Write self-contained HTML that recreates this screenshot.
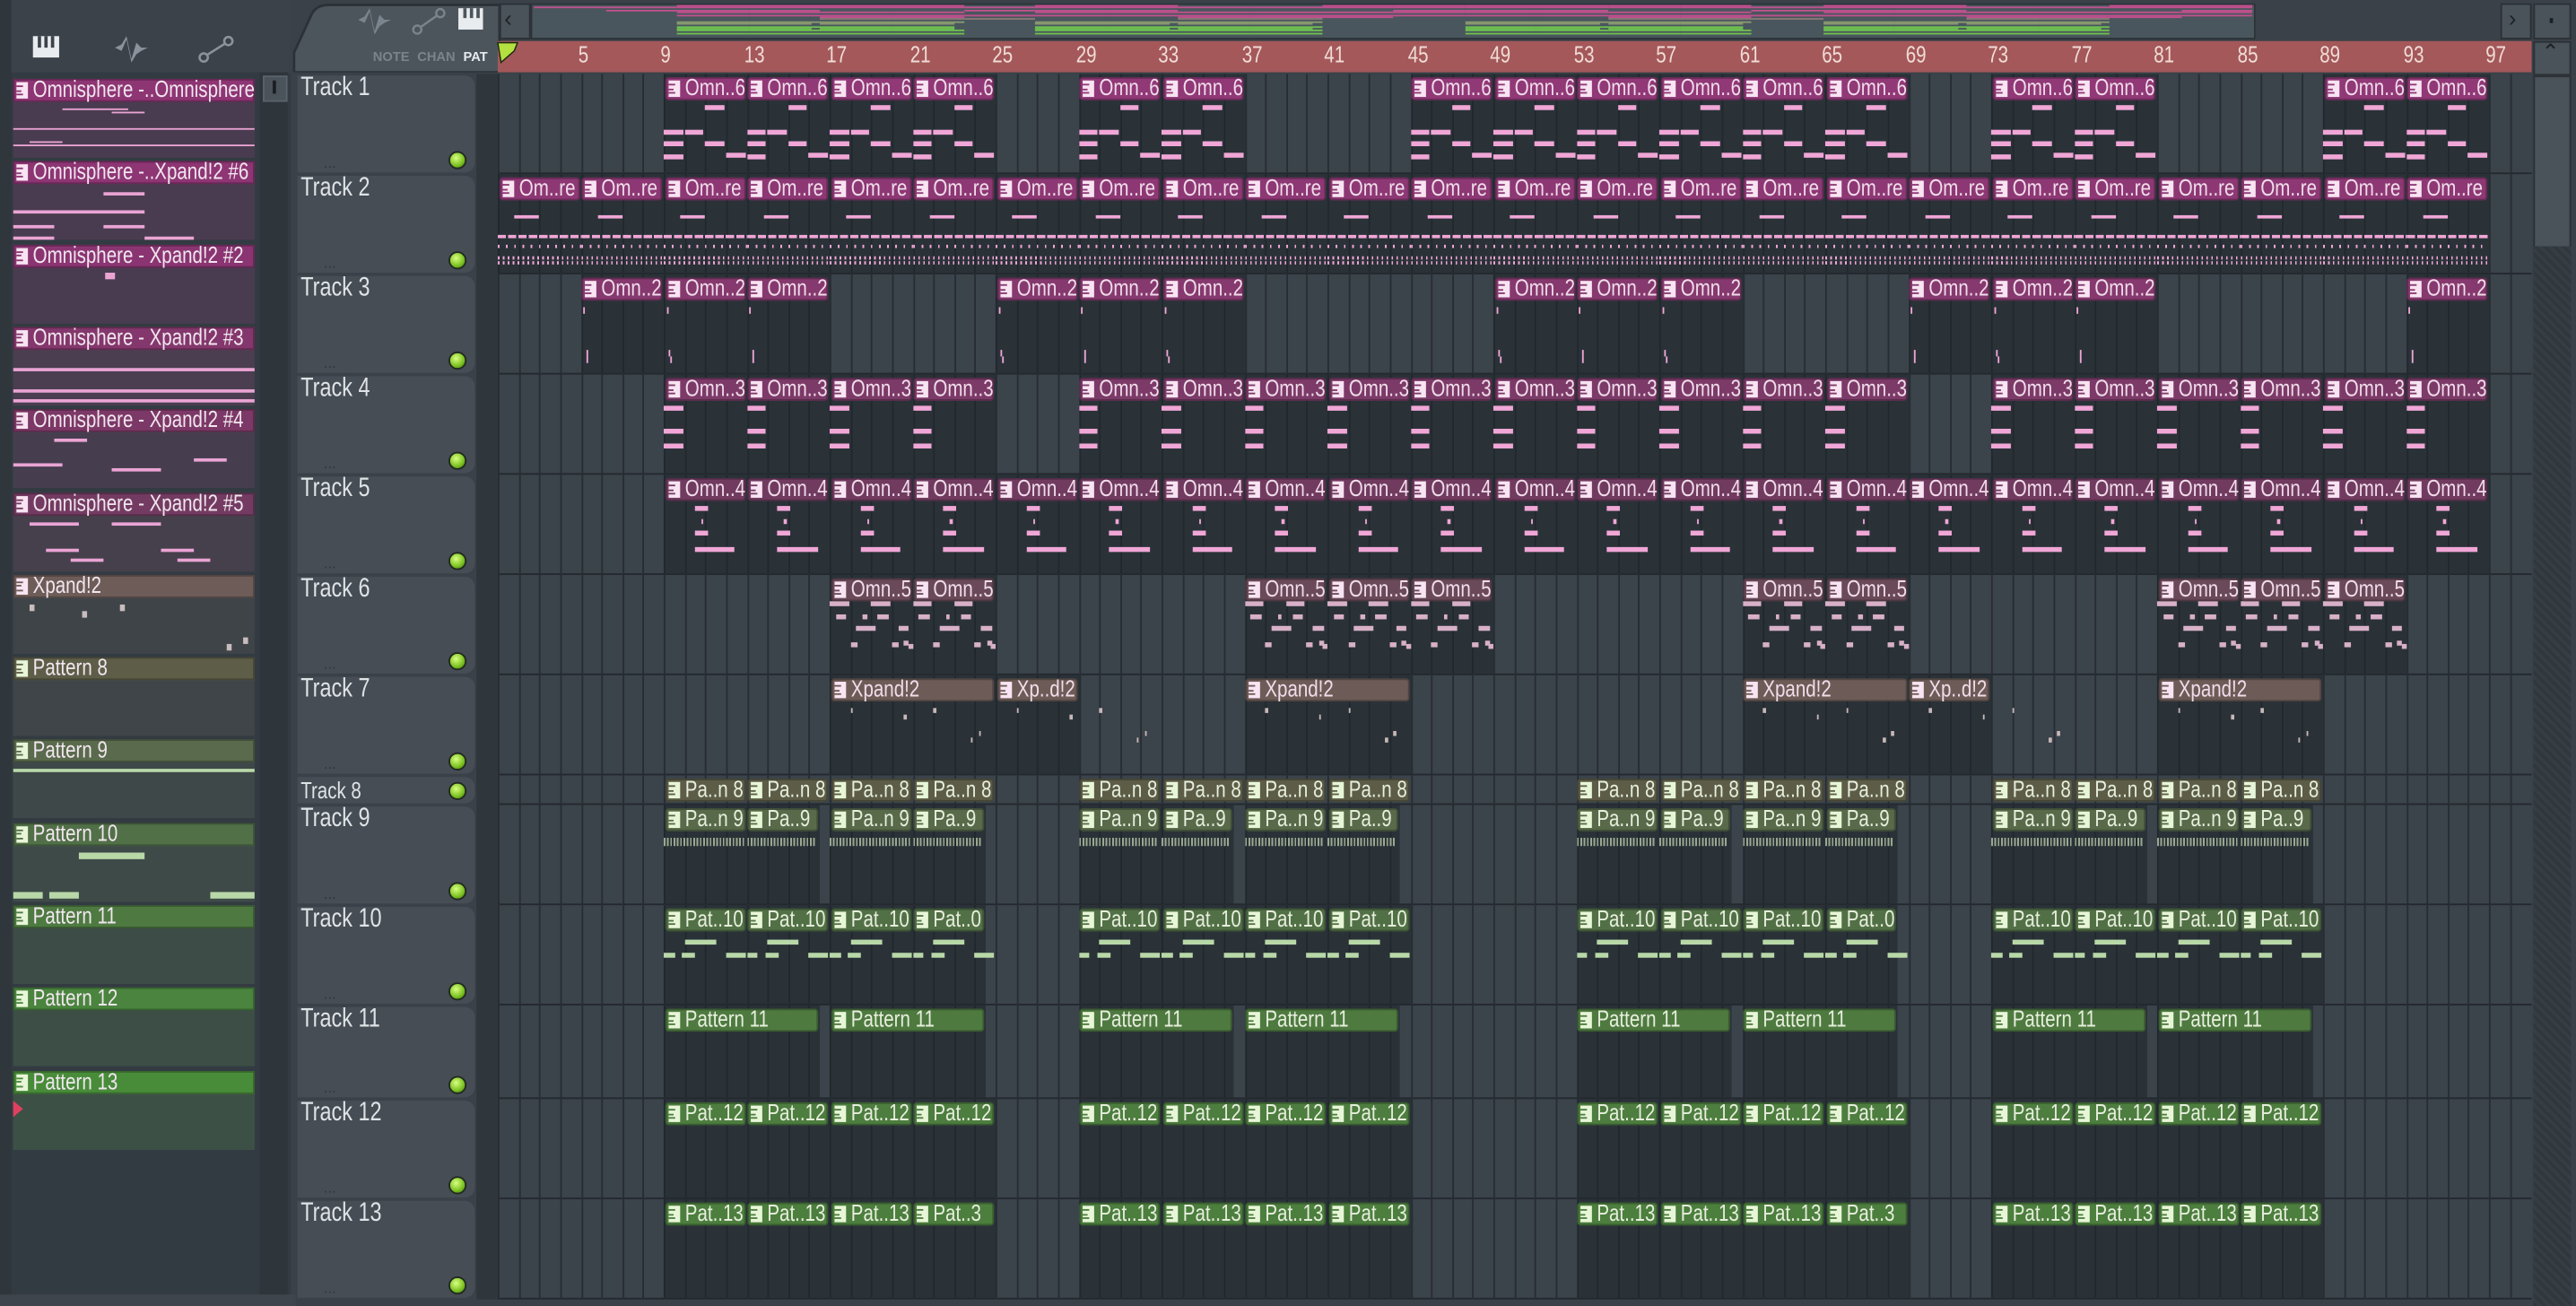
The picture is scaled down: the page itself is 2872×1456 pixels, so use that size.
<!DOCTYPE html>
<html><head><meta charset="utf-8">
<style>
html,body{margin:0;padding:0;background:#3a4148;overflow:hidden;width:2872px;height:1456px}
#w{position:absolute;left:0;top:0;width:1568px;height:795px;transform:scale(1.83163,1.83145);transform-origin:0 0;background:#3a4148;font-family:"Liberation Sans Narrow","Liberation Sans",sans-serif;overflow:hidden}
.a{position:absolute}
.t{position:absolute;white-space:nowrap}
.cn{display:inline-block;transform:scaleX(.8);transform-origin:0 0;white-space:nowrap}
</style></head><body>
<div id="w">
 <div class="a" style="left:0;top:0;width:7px;height:795px;background:#2f363c"></div>
 <div class="a" style="left:7px;top:0;width:170px;height:44px;background:#3b4249"></div>
 <div class="a" style="left:7px;top:44px;width:170px;height:745px;background:#333b42"></div>
 <div class="a" style="left:158px;top:44px;width:17px;height:745px;background:#2e353b"></div>
 <div class="a" style="left:160px;top:46px;width:13px;height:14px;background:#4a525a;border:1px solid #5a636b"></div>
 <div class="a" style="left:166px;top:49px;width:2px;height:8px;background:#1a1e22"></div>
 <div class="a" style="left:0;top:788px;width:180px;height:7px;background:#3e454c"></div>
 <svg class="a" style="left:20px;top:20px" width="130" height="20" viewBox="0 0 130 20">
  <rect x="0" y="2" width="16" height="13" fill="#e8ecef"/><rect x="3" y="2" width="2" height="7" fill="#3b4249"/><rect x="7" y="2" width="2" height="7" fill="#3b4249"/><rect x="11" y="2" width="2" height="7" fill="#3b4249"/>
  <path d="M50 9 L54 7 L57 2 L60 16 L63 6 L66 9 L70 9 L66 11 L63 13 L60 18 L57 4 L54 11 L50 9Z" fill="#8a939b"/>
  <circle cx="104" cy="15" r="2.5" fill="none" stroke="#8a939b" stroke-width="1.4"/><circle cx="119" cy="5" r="2.5" fill="none" stroke="#8a939b" stroke-width="1.4"/><line x1="106" y1="13.5" x2="117" y2="6.5" stroke="#8a939b" stroke-width="1.4"/>
 </svg>

 <div class="a" style="left:176px;top:0;width:1392px;height:45px;background:#3a4148"></div>
 <svg class="a" style="left:178px;top:2px" width="128" height="42" viewBox="0 0 128 42"><path d="M1 42 L1 30 L12 6 Q15 1 22 1 L126 1 L126 42Z" fill="#4d555c" stroke="#2b3136" stroke-width="1.5"/></svg>
 <svg class="a" style="left:218px;top:3px" width="80" height="20" viewBox="0 0 80 20">
  <path d="M0 9 L4 7 L7 2 L10 16 L13 6 L16 9 L20 9 L16 11 L13 13 L10 18 L7 4 L4 11Z" fill="#7a848c"/>
  <circle cx="36" cy="15" r="2.5" fill="none" stroke="#7a848c" stroke-width="1.3"/><circle cx="50" cy="5" r="2.5" fill="none" stroke="#7a848c" stroke-width="1.3"/><line x1="38" y1="13.5" x2="48" y2="6.5" stroke="#7a848c" stroke-width="1.3"/>
  <rect x="61" y="2" width="15" height="13" fill="#e8ecef"/><rect x="64" y="2" width="2" height="6" fill="#4d555c"/><rect x="68" y="2" width="2" height="6" fill="#4d555c"/><rect x="72" y="2" width="2" height="6" fill="#4d555c"/>
 </svg>
 <div class="t" style="left:227px;top:30px;font-size:8px;color:#7a848c;font-weight:bold">NOTE</div>
 <div class="t" style="left:254px;top:30px;font-size:8px;color:#7a848c;font-weight:bold">CHAN</div>
 <div class="t" style="left:282px;top:30px;font-size:8px;color:#e6ebee;font-weight:bold">PAT</div>
 <div class="a" style="left:304px;top:2px;width:17px;height:20px;background:#4a535a;border:1px solid #2a3035"></div>
 <div class="t" style="left:307px;top:3px;font-size:14px;color:#1e2226">&lsaquo;</div>
 <div class="a" style="left:323px;top:2px;width:1048px;height:20px;background:#4a565d;border:1px solid #2c3338"></div>
 <div class="a" style="left:1522px;top:2px;width:17px;height:20px;background:#4a535a;border:1px solid #2a3035"></div>
 <div class="t" style="left:1527px;top:3px;font-size:14px;color:#1e2226">&rsaquo;</div>
 <div class="a" style="left:1542px;top:2px;width:21px;height:20px;background:#4a535a;border:1px solid #2a3035"></div>
 <div class="a" style="left:1552px;top:11px;width:2px;height:3px;background:#1a1e22"></div>
 <div class="a" style="left:303px;top:25px;width:1238px;height:19px;background:#a4585a"></div>
 <svg class="a" style="left:302px;top:25px" width="14" height="14" viewBox="0 0 14 14"><path d="M1 1 L13 1 L11 6 L3 13 Z" fill="#b4e040" stroke="#1c2a10" stroke-width="0.8"/></svg>
 <div class="a" style="left:1542px;top:25px;width:21px;height:19px;background:#4a535a;border:1px solid #2a3035"></div>
 <div class="t" style="left:1547px;top:24px;font-size:13px;color:#1e2226">&#8963;</div>
 <div class="a" style="left:1542px;top:46px;width:21px;height:103px;background:#4a535a;border:1px solid #2a3035"></div>
 <div class="a" style="left:1542px;top:150px;width:23px;height:645px;background:repeating-linear-gradient(45deg,#30373d 0 2px,#363d43 2px 4px)"></div>
</div>
<script>
(function(){
const W=document.getElementById('w');
function el(css,html,cls){const d=document.createElement('div');d.className=cls||'a';d.style.cssText=css;if(html)d.innerHTML=html;W.appendChild(d);return d;}
const cn=s=>'<span class="cn">'+s+'</span>';
const X0=303,BW=12.625;
const bx=n=>X0+(n-1)*BW;
[5,9,13,17,21,25,29,33,37,41,45,49,53,57,61,65,69,73,77,81,85,89,93,97].forEach(n=>{
 el('left:'+(bx(n)-2)+'px;top:25px;font-size:14px;color:#f0dcd6',cn(''+n),'t');});
const ovx=b=>325+(b-1)*10.9;
el('left:303px;top:45px;width:1238px;height:746px;background:#3b434b');
const tops=[45,106,167,228,289,350,411,472,490,551,612,669,730,791];
for(let i=0;i<13;i++){
 const t=tops[i],h=tops[i+1]-t;
 el('left:181px;top:'+(t+1)+'px;width:108px;height:'+(h-2)+'px;background:#464d55;border-radius:0 6px 6px 0');
 el('left:183px;top:'+(t+(h<30?1:0))+'px;font-size:'+(h<30?14:16)+'px;color:#dfe3e6',cn('Track '+(i+1)),'t');
 const dy=h<30?t+9:t+h-9;
 el('left:273px;top:'+(dy-5)+'px;width:9px;height:9px;border-radius:50%;background:radial-gradient(circle at 40% 35%,#d8ff80,#7ac020 60%,#3a6a10);border:1px solid #222a20');
 if(h>30) el('left:197px;top:'+(t+h-12)+'px;font-size:9px;color:#2f353b','...','t');
 el('left:290px;top:'+t+'px;width:13px;height:'+h+'px;background:#2f363c');
 el('left:303px;top:'+(t+h-1)+'px;width:1238px;height:1px;background:#23292e');
}
let g='';
for(let n=1;n<=98;n++){g+='<div style="position:absolute;left:'+(bx(n)-X0)+'px;top:0;width:1px;height:746px;background:#272d32"></div>';}
const pinkH=['#913877','#8d3874','#86396e','#7c3a68','#713b60','#6a4a58'];
const A=(s,e)=>{const r=[];for(let b=s;b<=e;b+=4)r.push(b);return r;};
const grpA=[9,13,17,21,29,33,37,41,53,57,61,65,73,77,81,85];
const T=[
 {c:pinkH[0],b:1,cl:[9,13,17,21,29,33,45,49,53,57,61,65,73,77,89,93].map(x=>[x,4,'Omn..6']),
  notes:[[2,19,1],[0,34,1],[1,34,1],[0,41,1],[2,41,1],[0,49,1],[3,48,1]]},
 {c:pinkH[1],b:1,cl:A(1,93).map(x=>[x,4,'Om..re']),notes:'t2'},
 {c:pinkH[2],b:1,cl:[5,9,13,25,29,33,49,53,57,69,73,77,93].map(x=>[x,4,'Omn..2']),notes:[[0.15,20,0.05],[0.25,46,0.05],[0.3,50,0.05]]},
 {c:pinkH[3],b:1,cl:[9,13,17,21,29,33,37,41,45,49,53,57,61,65,73,77,81,85,89,93].map(x=>[x,4,'Omn..3']),notes:[[0,19,1],[0,33,1],[0,42,1]]},
 {c:pinkH[4],b:1,cl:A(9,93).map(x=>[x,4,'Omn..4']),notes:[[1.5,19,0.7],[1.8,27,0.2],[1.5,34,0.7],[1.5,44,2]]},
 {c:pinkH[5],n:'#d8b0c8',b:1,cl:[17,21,37,41,45,61,65,81,85,89].map(x=>[x,4,'Omn..5']),notes:[[0,16,1],[2,16,1],[0.3,24,0.6],[2.3,24,0.6],[1.6,24,0.3],[1.3,31,1],[3.3,31,0.6],[1,41,0.4],[3,41,0.4],[3.6,40,0.3],[3.8,42,0.3]]},
 {c:'#6d5b57',n:'#c8b8b8',b:1,cl:[[17,8,'Xpand!2'],[25,4,'Xp..d!2'],[37,8,'Xpand!2'],[61,8,'Xpand!2'],[69,4,'Xp..d!2'],[81,8,'Xpand!2']],notes:[[1,20,0.2],[3.6,24,0.2],[5,20,0.2],[6.8,38,0.2],[7.2,34,0.2]]},
 {c:'#5c5c47',cl:grpA.map(x=>[x,4,'Pa..n 8']),notes:[]},
 {c:'#586a4a',n:'#a8b8a0',b:1,cl:grpA.map((x,i)=>[x,i%2?3.5:4,i%2?'Pa..9':'Pa..n 9']),notes:'t9'},
 {c:'#527046',n:'#b8d8a8',b:1,cl:grpA.map((x,i)=>[x,i%8==3?3.5:4,i%8==3?'Pat..0':'Pat..10']),notes:[[1,21,1.6],[0,29,0.6],[0.9,29,0.7],[3,29,1]]},
 {c:'#4e7a40',b:1,cl:[9,17,29,37,53,61,73,81].map(x=>[x,7.5,'Pattern 11']),notes:[]},
 {c:'#4d7d3f',b:1,cl:grpA.map(x=>[x,4,'Pat..12']),notes:[]},
 {c:'#4c7e3e',b:1,cl:grpA.map((x,i)=>[x,4,i==3||i==11?'Pat..3':'Pat..13']),notes:[]},
];
const icon=(c,bg)=>'<div style="position:absolute;left:2px;top:2px;width:7px;height:10px;background:'+bg+'"></div>'+
 '<div style="position:absolute;left:2px;top:4px;width:4px;height:1px;background:'+c+'"></div><div style="position:absolute;left:2px;top:6.5px;width:3px;height:1px;background:'+c+'"></div><div style="position:absolute;left:2px;top:9px;width:4px;height:1px;background:'+c+'"></div>';
T.forEach((tk,i)=>{
 const t=tops[i],h=tops[i+1]-t;
 tk.cl.forEach(([s,len,name])=>{
  const x=bx(s)-X0,w=len*BW;
  if(tk.b&&h>30) g+='<div style="position:absolute;left:'+x+'px;top:'+(t-45)+'px;width:'+w+'px;height:'+(h-1)+'px;background:rgba(30,36,42,.55)"></div>';
  const nc=tk.n||'#f0a6d6';
  if(Array.isArray(tk.notes)) tk.notes.forEach(([nx,ny,nw])=>{
   g+='<div style="position:absolute;left:'+(x+nx*BW)+'px;top:'+(t-45+ny)+'px;width:'+Math.max(1,nw*BW-1)+'px;height:'+(i==2?4:3)+'px;background:'+nc+'"></div>';});
  else if(tk.notes=='t2'){
   g+='<div style="position:absolute;left:'+(x+BW*0.8)+'px;top:'+(t-45+25)+'px;width:'+BW*1.2+'px;height:1.5px;background:'+nc+'"></div>';
   g+='<div style="position:absolute;left:'+x+'px;top:'+(t-45+37)+'px;width:'+w+'px;height:1.5px;background:repeating-linear-gradient(90deg,'+nc+' 0 5px,transparent 5px 6.3px)"></div>';
   g+='<div style="position:absolute;left:'+x+'px;top:'+(t-45+43)+'px;width:'+w+'px;height:1.5px;background:repeating-linear-gradient(90deg,'+nc+' 0 1px,transparent 1px 5px)"></div>';
   g+='<div style="position:absolute;left:'+x+'px;top:'+(t-45+50)+'px;width:'+w+'px;height:1.5px;background:repeating-linear-gradient(90deg,'+nc+' 0 1px,transparent 1px 3px)"></div>';
   g+='<div style="position:absolute;left:'+x+'px;top:'+(t-45+53)+'px;width:'+w+'px;height:1.5px;background:repeating-linear-gradient(90deg,'+nc+' 0 1px,transparent 1px 3px)"></div>';
  } else if(tk.notes=='t9'){
   g+='<div style="position:absolute;left:'+x+'px;top:'+(t-45+20)+'px;width:'+(w-2)+'px;height:5px;background:repeating-linear-gradient(90deg,#9aa890 0 1px,transparent 1px 2px)"></div>';
  }
  g+='<div style="position:absolute;left:'+(x+0.5)+'px;top:'+(t-45+2)+'px;width:'+(w-1.5)+'px;height:14px;background:'+tk.c+';border-radius:2px;box-shadow:inset 0 0 0 1px rgba(0,0,0,.25);overflow:hidden;white-space:nowrap">'+
   icon(tk.c,i<7?'#f8e4f2':'#e8f6d8')+
   '<div style="position:absolute;left:12px;top:-2px;font-size:14px;color:'+(i<7?'#f0dcea':'#e6eedc')+'">'+cn(name)+'</div></div>';
  const oc=i<6?'#c0508e':(i<7?'#8a7a78':(i<9?'#8a9a70':'#6ec050'));
  const oy=3+i*1.4;
  el('left:'+ovx(s)+'px;top:'+oy+'px;width:'+(len*10.9)+'px;height:1px;background:'+oc);
 });
});
el('left:303px;top:45px;width:1238px;height:746px;overflow:hidden',g);
const P=[['Omnisphere -..Omnisphere','#8e3574','#4a3c50'],['Omnisphere -..Xpand!2 #6','#8e3574','#4a3c50'],['Omnisphere - Xpand!2 #2','#8a3572','#4a3c50'],['Omnisphere - Xpand!2 #3','#84376c','#4a3e50'],['Omnisphere - Xpand!2 #4','#7c3866','#463e4e'],['Omnisphere - Xpand!2 #5','#743b62','#45404c'],['Xpand!2','#6e5c58','#3f4449'],['Pattern 8','#5e5e48','#3f4548'],['Pattern 9','#5a6a4c','#3e4848'],['Pattern 10','#527048','#3e4a48'],['Pattern 11','#4e7a42','#3d4c46'],['Pattern 12','#4a843e','#3d4e46'],['Pattern 13','#488c3a','#3d5046']];
P.forEach(([n,c,b],i)=>{
 const y=48+i*50.3;
 el('left:8px;top:'+(y+14)+'px;width:147px;height:34px;background:'+b);
 el('left:8px;top:'+y+'px;width:147px;height:14px;overflow:hidden;background:'+c+';box-shadow:inset 0 0 0 1px rgba(0,0,0,.25)',icon(c,i<7?'#f8e4f2':'#e8f6d8')+'<div style="position:absolute;left:12px;top:-2px;font-size:14px;color:#f0e6ee;white-space:nowrap">'+cn(n)+'</div>');
 let s='';
 const nc=i<6?'#eaa4d4':(i<7?'#c8bcbc':'#b8d8a8');
 const rows=[[[10,22,20,1],[30,2,40,1],[60,4,20,1],[0,14,147,1],[0,24,147,1]],[[55,3,25,2],[0,14,80,2],[0,23,25,2],[55,23,25,2],[0,30,25,2],[80,30,30,2]],[[56,1,6,4]],[[0,9,147,2],[0,22,147,2],[0,28,147,2]],[[25,2,20,2],[0,17,30,2],[60,20,30,2],[110,14,20,2]],[[10,2,30,2],[60,2,30,2],[20,18,20,2],[90,18,20,2],[35,24,20,2],[100,24,20,2]],[[10,2,3,4],[42,6,3,4],[65,2,3,4],[130,26,3,4],[140,22,3,4]],[],[[0,2,147,2]],[[40,2,40,4],[0,26,18,4],[22,26,18,4],[120,26,27,4]],[],[],[]];
 rows[i].forEach(([x,yy,w,hh])=>{s+='<div style="position:absolute;left:'+x+'px;top:'+yy+'px;width:'+w+'px;height:'+hh+'px;background:'+nc+'"></div>';});
 if(s) el('left:8px;top:'+(y+16)+'px;width:147px;height:32px;overflow:hidden',s);
});
el('left:8px;top:670px;width:0;height:0;border-left:6px solid #e04060;border-top:5px solid transparent;border-bottom:5px solid transparent');
})();
</script>
</body></html>
